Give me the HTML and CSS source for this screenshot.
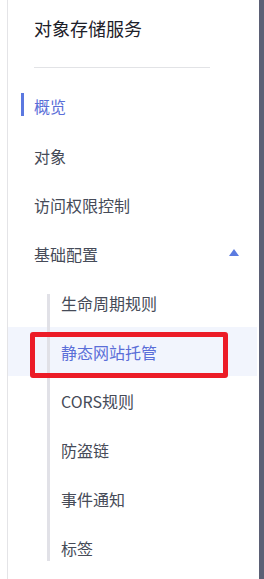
FILE: index.html
```html
<!DOCTYPE html>
<html lang="zh-CN">
<head>
<meta charset="utf-8">
<title>对象存储服务</title>
<link rel="stylesheet" href="styles.css">
</head>
<body>
<div class="page">
  <aside class="sidebar">
    <div class="header">
      <div class="title">对象存储服务</div>
      <div class="divider"></div>
    </div>
    <ul class="menu">
      <li class="item first active"><span>概览</span></li>
      <li class="item"><span>对象</span></li>
      <li class="item"><span>访问权限控制</span></li>
      <li class="item group"><span>基础配置</span><i class="caret"></i></li>
      <li class="sub">
        <ul class="sublist">
          <li class="item subitem"><span>生命周期规则</span></li>
          <li class="item subitem selected"><span>静态网站托管</span><i class="mark"></i></li>
          <li class="item subitem"><span>CORS规则</span></li>
          <li class="item subitem"><span>防盗链</span></li>
          <li class="item subitem"><span>事件通知</span></li>
          <li class="item subitem"><span>标签</span></li>
        </ul>
      </li>
    </ul>
  </aside>
  <div class="gap"></div>
  <div class="edge"></div>
</div>
</body>
</html>
```

FILE: styles.css
```css
* { box-sizing: border-box; }
html, body { margin: 0; padding: 0; background: #fff; }
body {
  font-family: "Noto Sans CJK SC", "Noto Sans", sans-serif;
  width: 264px;
  height: 579px;
  overflow: hidden;
}
.page {
  display: flex;
  height: 579px;
  padding-left: 7px;
}
.sidebar {
  width: 250px;
  border-left: 1px solid #e4e4e7;
  display: flex;
  flex-direction: column;
}
.gap { width: 2px; }
.edge { width: 5px; background: #5b6075; }
.header {
  padding: 16px 0 0 26px;
}
.title {
  font-size: 18px;
  line-height: 24px;
  color: #1d2029;
}
.divider {
  margin-top: 27px;
  width: 176px;
  height: 1px;
  background: #e2e3e6;
}
.menu, .sublist {
  list-style: none;
  margin: 0;
  padding: 0;
}
.menu { margin-top: 13px; }
.item {
  position: relative;
  height: 49px;
  display: flex;
  align-items: center;
  padding-left: 26px;
  font-size: 16px;
  color: #464b58;
}
.item.first { height: 50px; }
.active { color: #5a6ed8; }
.active::before {
  content: "";
  position: absolute;
  left: 13px;
  top: 12px;
  width: 3px;
  height: 23px;
  background: #5b78e0;
}
.group { justify-content: space-between; padding-right: 18px; }
.caret {
  width: 0;
  height: 0;
  border-left: 5px solid transparent;
  border-right: 5px solid transparent;
  border-bottom: 7px solid #5b7be0;
  margin-top: -2px;
}
.sub { position: relative; }
.sub::before {
  content: "";
  position: absolute;
  left: 39px;
  top: 16px;
  bottom: 11px;
  width: 3px;
  background: #e1e1e7;
  z-index: 1;
}
.subitem { padding-left: 53px; }
.selected {
  background: #f2f5fd;
  color: #5a6ed8;
}
.mark {
  position: absolute;
  left: 22px;
  top: 5px;
  width: 198px;
  height: 46px;
  border: 5px solid #ec1c27;
  border-radius: 3px;
  z-index: 2;
}
```
